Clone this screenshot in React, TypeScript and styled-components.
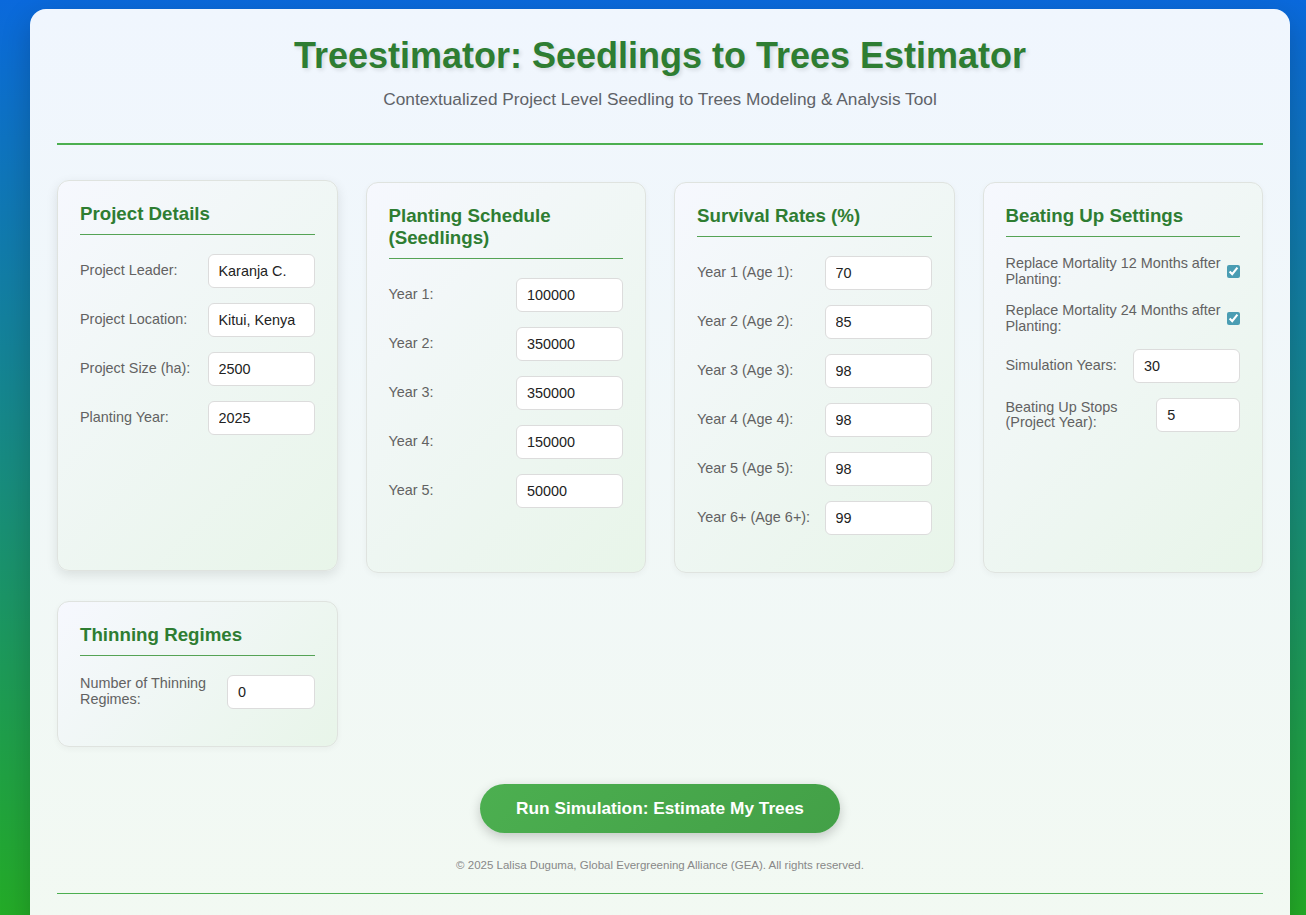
import React from "react";
import styled, { createGlobalStyle } from "styled-components";

const GlobalStyle = createGlobalStyle`
  html, body {
    margin: 0;
    height: 100%;
  }
  body {
    font-family: "Liberation Sans", Arial, sans-serif;
    background: linear-gradient(to bottom, #0a69dc 0%, #24ab27 100%) fixed;
  }
`;

const Page = styled.div`
  padding: 9px 16px 0 30px;
`;

const Container = styled.main`
  background: linear-gradient(180deg, #f0f6fe 0%, #f2f9f2 100%);
  border-radius: 16px;
  padding: 26px 27px 40px;
  box-shadow: 0 10px 30px rgba(0, 0, 0, 0.2);
`;

const Header = styled.header`
  text-align: center;
  padding-bottom: 33px;
  border-bottom: 2px solid #4caf50;
`;

const Title = styled.h1`
  margin: 0;
  font-size: 36px;
  font-weight: 700;
  color: #2e7d32;
  text-shadow: 2px 2px 4px rgba(0, 0, 0, 0.12);
`;

const Subtitle = styled.p`
  margin: 12px 0 0;
  font-size: 17.28px;
  color: #5f6368;
`;

const CardGrid = styled.section`
  display: grid;
  grid-template-columns: repeat(4, 1fr);
  gap: 28px;
  margin-top: 37px;
`;

const Card = styled.div<{ $raised?: boolean }>`
  background: linear-gradient(135deg, #f6f8fe 0%, #e8f5e9 100%);
  border: 1px solid #dfe3df;
  border-radius: 12px;
  padding: 22px;
  box-shadow: ${({ $raised }) =>
    $raised ? "0 4px 12px rgba(0, 0, 0, 0.1)" : "0 2px 6px rgba(0, 0, 0, 0.04)"};
  transform: ${({ $raised }) => ($raised ? "translateY(-2px)" : "none")};
`;

const CardTitle = styled.h3`
  margin: 0 0 19px;
  padding-bottom: 9px;
  font-size: 18.72px;
  font-weight: 700;
  color: #2e7d32;
  border-bottom: 1px solid #55a355;
`;

const Field = styled.div`
  display: flex;
  align-items: center;
  justify-content: space-between;
  margin-bottom: 15px;
`;

const Label = styled.label`
  font-size: 14.4px;
  line-height: 1.1;
  color: #626262;
`;

const TextInput = styled.input`
  box-sizing: border-box;
  width: 107px;
  min-width: 0;
  padding: 8px 10px;
  border: 1px solid #dcdcdc;
  border-radius: 6px;
  background: #fff;
  font-family: "Liberation Sans", Arial, sans-serif;
  font-size: 14.4px;
  color: #222;
  outline: none;
`;

const Check = styled.input`
  flex-shrink: 0;
  width: 13px;
  height: 13px;
  margin: 0 0 0 4px;
  accent-color: #4a9db3;
`;

const Actions = styled.div`
  text-align: center;
  margin-top: 37px;
`;

const RunButton = styled.button`
  border: none;
  border-radius: 25px;
  padding: 14px 36px;
  background: linear-gradient(135deg, #4caf50 0%, #43a047 100%);
  color: #fff;
  font-family: "Liberation Sans", Arial, sans-serif;
  font-size: 17.28px;
  font-weight: 700;
  box-shadow: 0 4px 12px rgba(0, 0, 0, 0.2);
  cursor: pointer;
`;

const Footer = styled.footer`
  margin-top: 26px;
  padding-bottom: 22px;
  border-bottom: 1px solid #4caf50;
  text-align: center;
  font-size: 11.52px;
  color: #888;
`;

type Row = { label: string; value: string };

const projectRows: Row[] = [
  { label: "Project Leader:", value: "Karanja C." },
  { label: "Project Location:", value: "Kitui, Kenya" },
  { label: "Project Size (ha):", value: "2500" },
  { label: "Planting Year:", value: "2025" },
];

const scheduleRows: Row[] = [
  { label: "Year 1:", value: "100000" },
  { label: "Year 2:", value: "350000" },
  { label: "Year 3:", value: "350000" },
  { label: "Year 4:", value: "150000" },
  { label: "Year 5:", value: "50000" },
];

const survivalRows: Row[] = [
  { label: "Year 1 (Age 1):", value: "70" },
  { label: "Year 2 (Age 2):", value: "85" },
  { label: "Year 3 (Age 3):", value: "98" },
  { label: "Year 4 (Age 4):", value: "98" },
  { label: "Year 5 (Age 5):", value: "98" },
  { label: "Year 6+ (Age 6+):", value: "99" },
];

const Fields = ({ rows }: { rows: Row[] }) => (
  <>
    {rows.map((r) => (
      <Field key={r.label}>
        <Label>{r.label}</Label>
        <TextInput type="text" defaultValue={r.value} />
      </Field>
    ))}
  </>
);

const App = () => {
  return (
    <>
      <GlobalStyle />
      <Page>
        <Container>
          <Header>
            <Title>Treestimator: Seedlings to Trees Estimator</Title>
            <Subtitle>
              Contextualized Project Level Seedling to Trees Modeling &amp; Analysis Tool
            </Subtitle>
          </Header>

          <CardGrid>
            <Card $raised>
              <CardTitle>Project Details</CardTitle>
              <Fields rows={projectRows} />
            </Card>

            <Card>
              <CardTitle>Planting Schedule (Seedlings)</CardTitle>
              <Fields rows={scheduleRows} />
            </Card>

            <Card>
              <CardTitle>Survival Rates (%)</CardTitle>
              <Fields rows={survivalRows} />
            </Card>

            <Card>
              <CardTitle>Beating Up Settings</CardTitle>
              <Field>
                <Label>Replace Mortality 12 Months after Planting:</Label>
                <Check type="checkbox" defaultChecked />
              </Field>
              <Field>
                <Label>Replace Mortality 24 Months after Planting:</Label>
                <Check type="checkbox" defaultChecked />
              </Field>
              <Fields
                rows={[
                  { label: "Simulation Years:", value: "30" },
                  { label: "Beating Up Stops (Project Year):", value: "5" },
                ]}
              />
            </Card>

            <Card>
              <CardTitle>Thinning Regimes</CardTitle>
              <Fields rows={[{ label: "Number of Thinning Regimes:", value: "0" }]} />
            </Card>
          </CardGrid>

          <Actions>
            <RunButton>Run Simulation: Estimate My Trees</RunButton>
          </Actions>

          <Footer>
            © 2025 Lalisa Duguma, Global Evergreening Alliance (GEA). All rights reserved.
          </Footer>
        </Container>
      </Page>
    </>
  );
};

export default App;
